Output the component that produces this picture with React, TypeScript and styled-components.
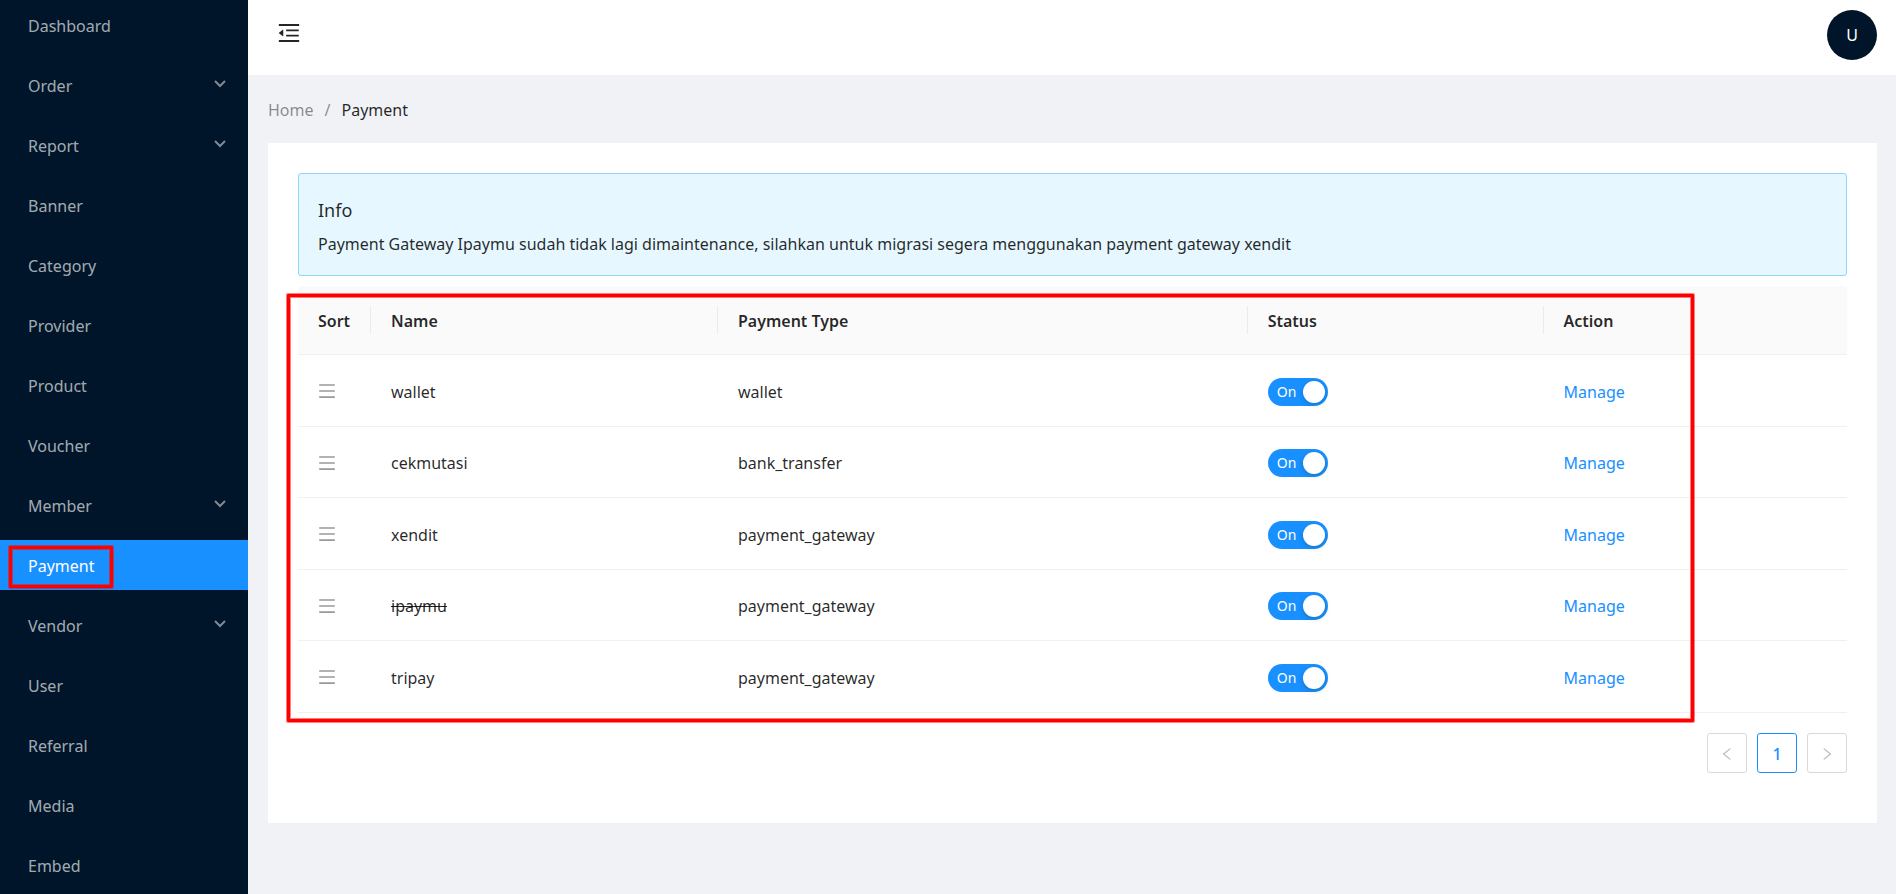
import React, { useState } from "react";
import styled, { createGlobalStyle, css } from "styled-components";
import {
  AiOutlineMenuFold,
  AiOutlineMenu,
  AiOutlineLeft,
  AiOutlineRight,
} from "react-icons/ai";

const GlobalStyle = createGlobalStyle`
  *, *::before, *::after { box-sizing: border-box; }
  body {
    margin: 0;
    background: #f0f2f5;
    color: rgba(0, 0, 0, 0.85);
    font-family: "Noto Sans", "Open Sans", sans-serif;
    font-size: 16px;
    line-height: 28px;
  }
  button { font: inherit; color: inherit; }
`;

const Layout = styled.div`
  display: flex;
  height: 100vh;
`;

const Sidebar = styled.aside`
  flex: 0 0 248px;
  background: #001529;
  overflow: hidden;
`;

const Menu = styled.ul`
  list-style: none;
  margin: 0;
  padding: 0;
  display: flex;
  flex-direction: column;
  gap: 10px;
`;

const MenuItem = styled.li`
  position: relative;
`;

const MenuLink = styled.a<{ $active?: boolean }>`
  display: flex;
  align-items: center;
  justify-content: space-between;
  height: 50px;
  padding: 1px 22px 0 28px;
  color: ${(p) => (p.$active ? "#fff" : "rgba(255, 255, 255, 0.65)")};
  background: ${(p) => (p.$active ? "#1890ff" : "transparent")};
  text-decoration: none;
`;

const Arrow = styled.svg`
  width: 12px;
  height: 8px;
  margin-bottom: 4px;
  fill: none;
  stroke: rgba(255, 255, 255, 0.5);
  stroke-width: 2;
`;

const Main = styled.div`
  flex: 1;
  min-width: 0;
  overflow: auto;
`;

const Header = styled.header`
  display: flex;
  align-items: flex-start;
  justify-content: space-between;
  height: 75px;
  padding: 10px 19px 0 28px;
  background: #fff;
`;

const IconButton = styled.button`
  display: flex;
  align-items: center;
  height: 46px;
  padding: 0;
  border: 0;
  background: none;
  cursor: pointer;
`;

const Avatar = styled.button`
  width: 50px;
  height: 50px;
  padding: 0;
  border: 0;
  border-radius: 50%;
  background: #001529;
  color: #fff;
`;

const Content = styled.main`
  padding: 21px 19px 20px 20px;
`;

const Breadcrumb = styled.nav`
  display: flex;
  gap: 11px;
  margin-bottom: 19px;
  color: rgba(0, 0, 0, 0.45);
`;

const CrumbLink = styled.a`
  color: inherit;
  text-decoration: none;
`;

const CrumbCurrent = styled.span`
  color: rgba(0, 0, 0, 0.85);
`;

const Card = styled.section`
  padding: 30px 30px 50px;
  background: #fff;
`;

const Alert = styled.div`
  margin-bottom: 10px;
  padding: 22px 19px 17px;
  border: 1px solid #91d5ff;
  border-radius: 3px;
  background: #e6f7ff;
`;

const AlertTitle = styled.div`
  margin-bottom: 6px;
  font-size: 18px;
`;

const AlertText = styled.div``;

const marker = css`
  position: absolute;
  border: 3px solid #f00;
  border-radius: 1px;
  box-shadow: 0 0 0 1px rgba(255, 0, 0, 0.5), inset 0 0 0 1px rgba(255, 0, 0, 0.5);
  pointer-events: none;
`;

const MenuMarker = styled.span`
  ${marker}
  inset: 6px 135px 2px 9px;
`;

const TableMarker = styled.span`
  ${marker}
  inset: 8px 153px -9px -11px;
`;

const TableWrap = styled.div`
  position: relative;
`;

const Table = styled.table`
  width: 100%;
  table-layout: fixed;
  border-collapse: separate;
  border-spacing: 0;
`;

const Th = styled.th<{ $width?: string }>`
  position: relative;
  width: ${(p) => p.$width ?? "auto"};
  height: 69px;
  padding: 2px 20px 0;
  border-bottom: 1px solid #f0f0f0;
  background: #fafafa;
  font-weight: 600;
  text-align: left;
  white-space: nowrap;
  &:first-child { border-top-left-radius: 3px; }
  &:last-child { border-top-right-radius: 3px; }
  &:not(:last-child)::after {
    content: "";
    position: absolute;
    top: 20px;
    right: 0;
    width: 1px;
    height: 28px;
    background: #ebebeb;
  }
`;

const Row = styled.tr`
  height: 72px;
  &:nth-child(even) { height: 71px; }
`;

const Td = styled.td`
  padding: 2px 20px 0;
  border-bottom: 1px solid #f0f0f0;
`;

const DragHandle = styled.button`
  display: flex;
  margin: 0 0 1px -1px;
  padding: 0;
  border: 0;
  background: none;
  color: #999;
  cursor: grab;
`;

const Switch = styled.label`
  position: relative;
  display: flex;
  align-items: center;
  width: 60px;
  height: 28px;
  padding: 0 9px;
  border-radius: 14px;
  background: rgba(0, 0, 0, 0.25);
  color: #fff;
  font-size: 14px;
  cursor: pointer;
  justify-content: flex-end;
  &:has(input:checked) {
    background: #1890ff;
    justify-content: flex-start;
  }
  &::after {
    content: "";
    position: absolute;
    top: 3px;
    left: 3px;
    width: 22px;
    height: 22px;
    border-radius: 50%;
    background: #fff;
    box-shadow: 0 2px 5px rgba(0, 35, 11, 0.2);
  }
  &:has(input:checked)::after {
    left: 35px;
  }
`;

const SwitchInput = styled.input`
  position: absolute;
  inset: 0;
  margin: 0;
  opacity: 0;
`;

const ManageLink = styled.a`
  color: #1890ff;
  text-decoration: none;
`;

const Pagination = styled.nav`
  display: flex;
  justify-content: flex-end;
  gap: 10px;
  margin-top: 20px;
`;

const PageButton = styled.button<{ $active?: boolean }>`
  display: flex;
  align-items: center;
  justify-content: center;
  width: 40px;
  height: 40px;
  padding: 2px 0 0;
  border: 1px solid ${(p) => (p.$active ? "#1890ff" : "#d9d9d9")};
  border-radius: 3px;
  background: #fff;
  color: ${(p) => (p.$active ? "#1890ff" : "rgba(0, 0, 0, 0.25)")};
  font-weight: ${(p) => (p.$active ? 500 : 400)};
`;

const menu: { label: string; sub?: boolean; active?: boolean }[] = [
  { label: "Dashboard" },
  { label: "Order", sub: true },
  { label: "Report", sub: true },
  { label: "Banner" },
  { label: "Category" },
  { label: "Provider" },
  { label: "Product" },
  { label: "Voucher" },
  { label: "Member", sub: true },
  { label: "Payment", active: true },
  { label: "Vendor", sub: true },
  { label: "User" },
  { label: "Referral" },
  { label: "Media" },
  { label: "Embed" },
];

const payments = [
  { name: "wallet", type: "wallet" },
  { name: "cekmutasi", type: "bank_transfer" },
  { name: "xendit", type: "payment_gateway" },
  { name: "ipaymu", type: "payment_gateway", retired: true },
  { name: "tripay", type: "payment_gateway" },
];

function StatusSwitch({ name }: { name: string }) {
  const [on, setOn] = useState(true);
  return (
    <Switch>
      <SwitchInput
        type="checkbox"
        role="switch"
        aria-label={`${name} status`}
        checked={on}
        onChange={() => setOn(!on)}
      />
      {on ? "On" : "Off"}
    </Switch>
  );
}

export default function App() {
  return (
    <Layout>
      <GlobalStyle />
      <Sidebar>
        <Menu>
          {menu.map((item) => (
            <MenuItem key={item.label}>
              <MenuLink href="#" $active={item.active}>
                {item.label}
                {item.sub && (
                  <Arrow viewBox="0 0 12 8" aria-hidden="true">
                    <path d="M1 1l5 5 5-5" />
                  </Arrow>
                )}
              </MenuLink>
              {item.active && <MenuMarker />}
            </MenuItem>
          ))}
        </Menu>
      </Sidebar>
      <Main>
        <Header>
          <IconButton aria-label="Collapse menu">
            <AiOutlineMenuFold size={26} />
          </IconButton>
          <Avatar>U</Avatar>
        </Header>
        <Content>
          <Breadcrumb aria-label="Breadcrumb">
            <CrumbLink href="#">Home</CrumbLink>
            <span>/</span>
            <CrumbCurrent>Payment</CrumbCurrent>
          </Breadcrumb>
          <Card>
            <Alert role="alert">
              <AlertTitle>Info</AlertTitle>
              <AlertText>
                Payment Gateway Ipaymu sudah tidak lagi dimaintenance, silahkan untuk migrasi segera
                menggunakan payment gateway xendit
              </AlertText>
            </Alert>
            <TableWrap>
              <Table>
                <thead>
                  <tr>
                    <Th $width="73px">Sort</Th>
                    <Th $width="22.4%">Name</Th>
                    <Th $width="34.2%">Payment Type</Th>
                    <Th $width="19.1%">Status</Th>
                    <Th>Action</Th>
                  </tr>
                </thead>
                <tbody>
                  {payments.map((p) => (
                    <Row key={p.name}>
                      <Td>
                        <DragHandle aria-label={`Move ${p.name}`}>
                          <AiOutlineMenu size={20} />
                        </DragHandle>
                      </Td>
                      <Td>{p.retired ? <del>{p.name}</del> : p.name}</Td>
                      <Td>{p.type}</Td>
                      <Td>
                        <StatusSwitch name={p.name} />
                      </Td>
                      <Td>
                        <ManageLink href="#">Manage</ManageLink>
                      </Td>
                    </Row>
                  ))}
                </tbody>
              </Table>
              <TableMarker />
            </TableWrap>
            <Pagination aria-label="Pagination">
              <PageButton disabled aria-label="Previous page">
                <AiOutlineLeft size={16} />
              </PageButton>
              <PageButton $active>1</PageButton>
              <PageButton disabled aria-label="Next page">
                <AiOutlineRight size={16} />
              </PageButton>
            </Pagination>
          </Card>
        </Content>
      </Main>
    </Layout>
  );
}
